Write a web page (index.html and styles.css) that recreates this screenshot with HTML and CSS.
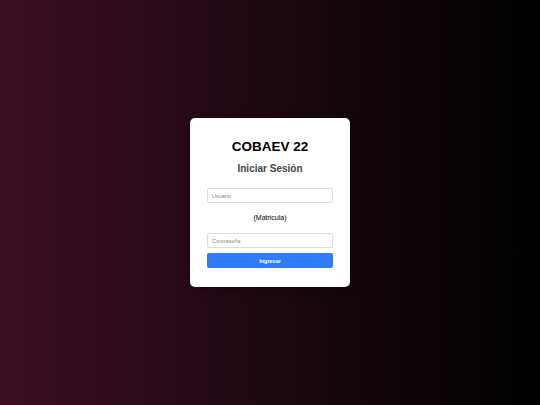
FILE: index.html
```html
<!DOCTYPE html>
<html lang="es">
<head>
<meta charset="utf-8">
<title>COBAEV 22</title>
<link rel="stylesheet" href="styles.css">
</head>
<body>
  <main class="card">
    <h1 class="title">COBAEV 22</h1>
    <h2 class="subtitle">Iniciar Sesión</h2>
    <form class="form">
      <input class="field" type="text" placeholder="Usuario">
      <p class="hint">(Matricula)</p>
      <input class="field" type="password" placeholder="Contraseña">
      <button class="btn" type="button">Ingresar</button>
    </form>
  </main>
</body>
</html>
```

FILE: styles.css
```css
html, body {
  margin: 0;
  height: 100%;
}
body {
  display: flex;
  align-items: center;
  justify-content: center;
  background: linear-gradient(to right, #3d0e24 0%, #1d0811 50%, #000 100%);
  font-family: "Liberation Sans", Arial, sans-serif;
}
.card {
  width: 160px;
  box-sizing: border-box;
  background: #fff;
  border-radius: 5px;
  padding: 21px 17px 19px;
  box-shadow: 0 2px 8px rgba(0,0,0,0.3);
  text-align: center;
}
.title {
  margin: 0;
  font-size: 13.5px;
  line-height: 16px;
  font-weight: bold;
  color: #000;
}
.subtitle {
  margin: 8px 0 0;
  font-size: 10px;
  line-height: 12px;
  font-weight: bold;
  color: #444;
}
.form {
  margin-top: 13px;
  display: flex;
  flex-direction: column;
}
.field {
  height: 15px;
  box-sizing: border-box;
  border: 1px solid #ddd;
  border-radius: 2px;
  padding: 0 4px;
  font-family: "Liberation Sans", Arial, sans-serif;
  font-size: 5.5px;
  color: #333;
  outline: none;
}
.field::placeholder {
  color: #888;
}
.hint {
  margin: 11px 0;
  font-size: 7px;
  line-height: 8px;
  color: #000;
}
.btn {
  margin-top: 5px;
  height: 15px;
  border: none;
  border-radius: 2px;
  background: #2e7cf6;
  color: #fff;
  font-family: "Liberation Sans", Arial, sans-serif;
  font-size: 5.5px;
  font-weight: bold;
  padding: 0;
}
```
